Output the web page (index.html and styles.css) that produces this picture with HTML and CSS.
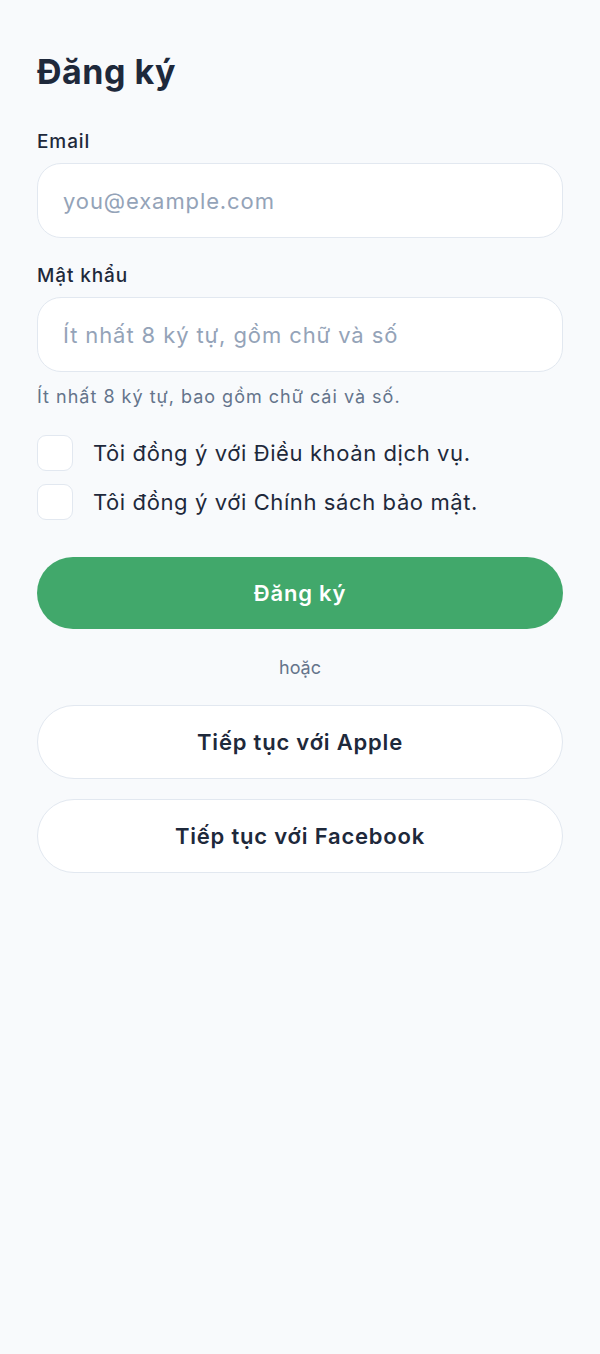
FILE: index.html
```html
<!DOCTYPE html>
<html lang="vi">
<head>
    <meta charset="UTF-8">
    <meta name="viewport" content="width=device-width, initial-scale=1.0">
    <title>Đăng ký</title>
    <link rel="stylesheet" href="styles.css">
</head>
<body>
    <main class="page">
        <h1 class="title">Đăng ký</h1>

        <form class="signup-form">
            <div class="field">
                <label class="field-label" for="email">Email</label>
                <input class="text-input" type="email" id="email" placeholder="you@example.com">
            </div>

            <div class="field field-password">
                <label class="field-label" for="password">Mật khẩu</label>
                <input class="text-input" type="password" id="password" placeholder="Ít nhất 8 ký tự, gồm chữ và số">
                <p class="hint">Ít nhất 8 ký tự, bao gồm chữ cái và số.</p>
            </div>

            <div class="checks">
                <label class="check-row">
                    <input type="checkbox" class="check-box">
                    <span>Tôi đồng ý với Điều khoản dịch vụ.</span>
                </label>
                <label class="check-row">
                    <input type="checkbox" class="check-box">
                    <span>Tôi đồng ý với Chính sách bảo mật.</span>
                </label>
            </div>

            <button type="submit" class="btn btn-primary">Đăng ký</button>
        </form>

        <p class="divider">hoặc</p>

        <div class="social">
            <button type="button" class="btn btn-outline">Tiếp tục với Apple</button>
            <button type="button" class="btn btn-outline">Tiếp tục với Facebook</button>
        </div>
    </main>
</body>
</html>
```

FILE: styles.css
```css
* {
    box-sizing: border-box;
}
body {
    margin: 0;
    background-color: #f8fafc;
    font-family: Inter, "Noto Sans", sans-serif;
    color: #1e293b;
}
.page {
    padding: 50px 37px 40px;
}
.title {
    margin: 0;
    font-size: 34px;
    line-height: 44px;
    font-weight: 700;
    letter-spacing: 0.5px;
}
.signup-form {
    margin-top: 36px;
}
.field-label {
    display: block;
    font-size: 19px;
    line-height: 24px;
    font-weight: 500;
    letter-spacing: 0.9px;
    margin-bottom: 9px;
}
.field-password {
    margin-top: 26px;
}
.text-input {
    display: block;
    width: 100%;
    height: 75px;
    padding: 0 25px;
    border: 1px solid #e2e8f0;
    border-radius: 24px;
    background: #fff;
    font-family: inherit;
    font-size: 22px;
    letter-spacing: 0.9px;
    color: #1e293b;
    outline: none;
}
.text-input::placeholder {
    color: #94a3b8;
}
.hint {
    margin: 13px 0 0;
    font-size: 18px;
    line-height: 24px;
    letter-spacing: 1px;
    color: #64748b;
}
.checks {
    margin-top: 26px;
    display: flex;
    flex-direction: column;
    gap: 13px;
}
.check-row {
    display: flex;
    align-items: center;
    gap: 20px;
    font-size: 22px;
    line-height: 36px;
    letter-spacing: 0.6px;
}
.check-box {
    appearance: none;
    margin: 0;
    width: 36px;
    height: 36px;
    border: 1px solid #e2e8f0;
    border-radius: 9px;
    background: #fff;
    flex-shrink: 0;
}
.btn {
    display: block;
    width: 100%;
    border-radius: 999px;
    font-family: inherit;
    font-size: 22px;
    font-weight: 600;
    letter-spacing: 0.8px;
    cursor: pointer;
}
.btn-primary {
    margin-top: 37px;
    height: 72px;
    border: none;
    background-color: #41a86b;
    color: #fff;
}
.divider {
    margin: 27px 0 0;
    text-align: center;
    font-size: 18px;
    line-height: 24px;
    color: #64748b;
}
.social {
    margin-top: 25px;
    display: flex;
    flex-direction: column;
    gap: 20px;
}
.btn-outline {
    height: 74px;
    border: 1px solid #e2e8f0;
    background: #fff;
    color: #1e293b;
}
```
